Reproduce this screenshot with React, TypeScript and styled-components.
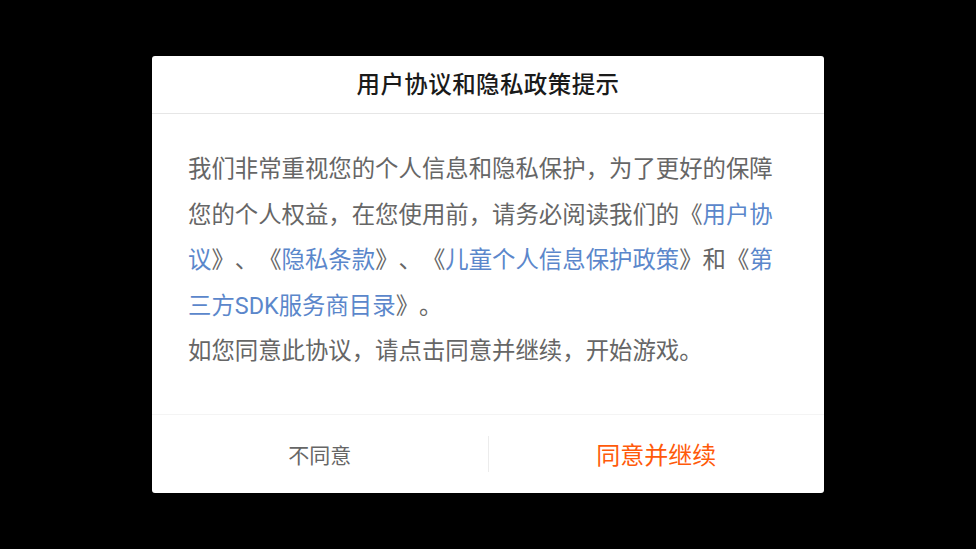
import styled, { createGlobalStyle } from "styled-components";

const GlobalStyle = createGlobalStyle`
  html, body {
    margin: 0;
    padding: 0;
    background: #000;
  }
  body {
    font-family: Roboto, "Noto Sans CJK SC", sans-serif;
    text-spacing-trim: space-all;
  }
`;

const Overlay = styled.div`
  width: 100vw;
  height: 100vh;
  background: #000;
  display: flex;
  align-items: center;
  justify-content: center;
`;

const Dialog = styled.div`
  width: 672px;
  background: #fff;
  border-radius: 3px;
  display: flex;
  flex-direction: column;
  overflow: hidden;
`;

const Header = styled.div`
  height: 58px;
  padding-bottom: 4px;
  display: flex;
  align-items: center;
  justify-content: center;
  border-bottom: 1px solid #e6e6e6;
  box-sizing: border-box;
`;

const Title = styled.h1`
  margin: 0;
  font-size: 23.5px;
  font-weight: 500;
  color: #1a1a1a;
  letter-spacing: 0.4px;
`;

const Body = styled.div`
  padding: 33px 36px 39px;
`;

const Paragraph = styled.p`
  margin: 0;
  font-size: 23.4px;
  line-height: 45.6px;
  color: #666;
  text-spacing-trim: space-all;
`;

const Link = styled.span`
  color: #5b87cb;
`;

const Footer = styled.div`
  height: 79px;
  display: flex;
  align-items: center;
  border-top: 1px solid #f4f4f4;
  box-sizing: border-box;
`;

const Button = styled.button<{ $primary?: boolean }>`
  flex: 1;
  height: 100%;
  border: none;
  background: transparent;
  padding: 0;
  font-family: inherit;
  font-size: ${(p) => (p.$primary ? "24px" : "21px")};
  color: ${(p) => (p.$primary ? "#ff5a0a" : "#666")};
  cursor: pointer;
`;

const Separator = styled.div`
  width: 1px;
  height: 36px;
  background: #ececec;
`;

export default function App() {
  return (
    <>
      <GlobalStyle />
      <Overlay>
        <Dialog>
          <Header>
            <Title>用户协议和隐私政策提示</Title>
          </Header>
          <Body>
            <Paragraph>
              我们非常重视您的个人信息和隐私保护，为了更好的保障您的个人权益，在您使用前，请务必阅读我们的《
              <Link>用户协议</Link>》、《<Link>隐私条款</Link>》、《
              <Link>儿童个人信息保护政策</Link>》和《
              <Link>第三方SDK服务商目录</Link>》。
            </Paragraph>
            <Paragraph>如您同意此协议，请点击同意并继续，开始游戏。</Paragraph>
          </Body>
          <Footer>
            <Button>不同意</Button>
            <Separator />
            <Button $primary>同意并继续</Button>
          </Footer>
        </Dialog>
      </Overlay>
    </>
  );
}
